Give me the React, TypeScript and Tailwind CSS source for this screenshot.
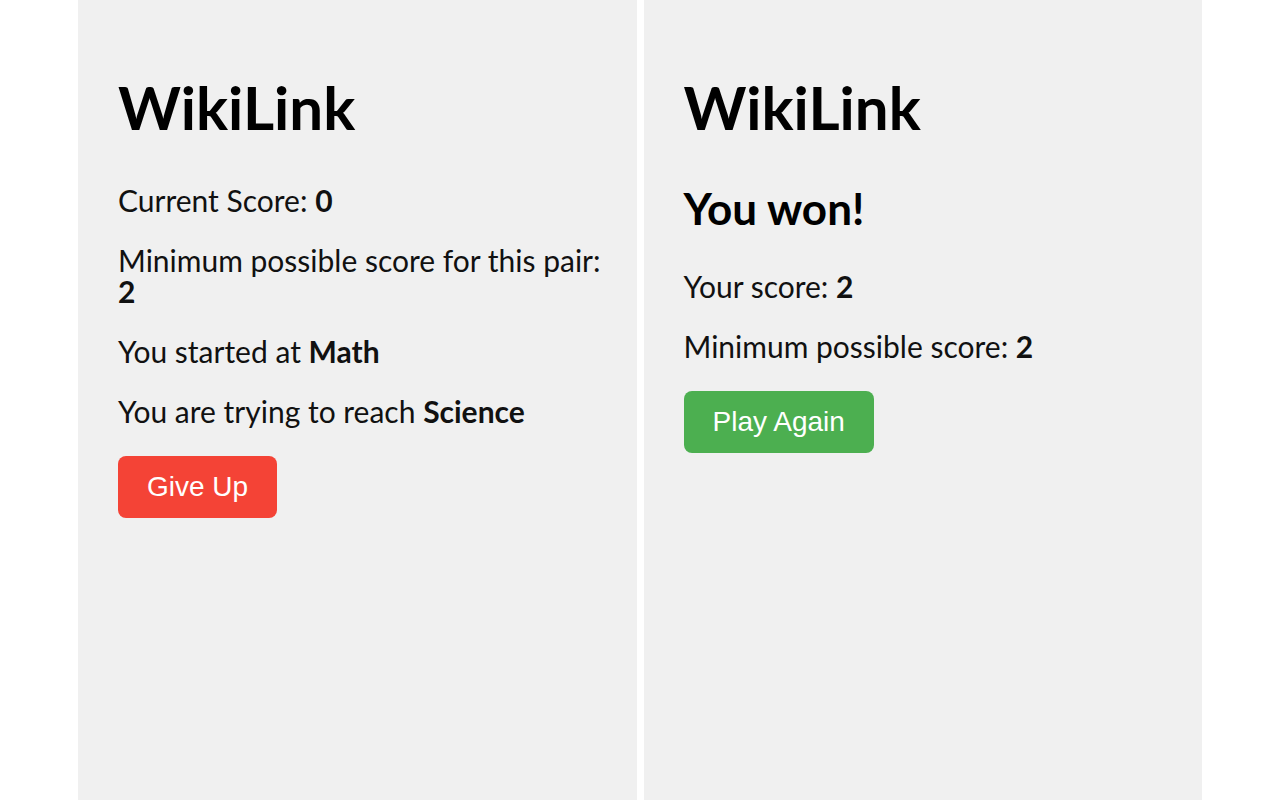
export default function App() {
  return (
    <div className="flex min-h-screen w-full justify-center gap-[7px] bg-white px-[78px] font-['Lato','Open_Sans',sans-serif] text-[#111]">
      {/* Game panel */}
      <div className="flex min-h-screen flex-1 flex-col items-start bg-[#f0f0f0] pl-[40px] pr-[20px] pt-[75px]">
        <h1 className="text-[60px] font-bold leading-[64px] text-black">WikiLink</h1>
        <p className="mt-[46px] text-[30px] leading-[31px]">
          Current Score: <b>0</b>
        </p>
        <p className="mt-[29px] text-[30px] leading-[31px]">
          Minimum possible score for this pair: <b>2</b>
        </p>
        <p className="mt-[29px] text-[30px] leading-[31px]">
          You started at <b>Math</b>
        </p>
        <p className="mt-[29px] text-[30px] leading-[31px]">
          You are trying to reach <b>Science</b>
        </p>
        <button className="mt-[29px] h-[62px] cursor-pointer rounded-[8px] bg-[#f44336] px-[29px] font-['Liberation_Sans',Arial,sans-serif] text-[28px] text-white">
          Give Up
        </button>
      </div>

      {/* Result panel */}
      <div className="flex min-h-screen flex-1 flex-col items-start bg-[#f0f0f0] pl-[40px] pr-[20px] pt-[75px]">
        <h1 className="text-[60px] font-bold leading-[64px] text-black">WikiLink</h1>
        <h2 className="mt-[45px] text-[44px] font-bold leading-[48px] text-black">You won!</h2>
        <p className="mt-[39px] text-[30px] leading-[31px]">
          Your score: <b>2</b>
        </p>
        <p className="mt-[29px] text-[30px] leading-[31px]">
          Minimum possible score: <b>2</b>
        </p>
        <button className="mt-[29px] h-[62px] cursor-pointer rounded-[8px] bg-[#4caf50] px-[29px] font-['Liberation_Sans',Arial,sans-serif] text-[28px] text-white">
          Play Again
        </button>
      </div>
    </div>
  );
}
